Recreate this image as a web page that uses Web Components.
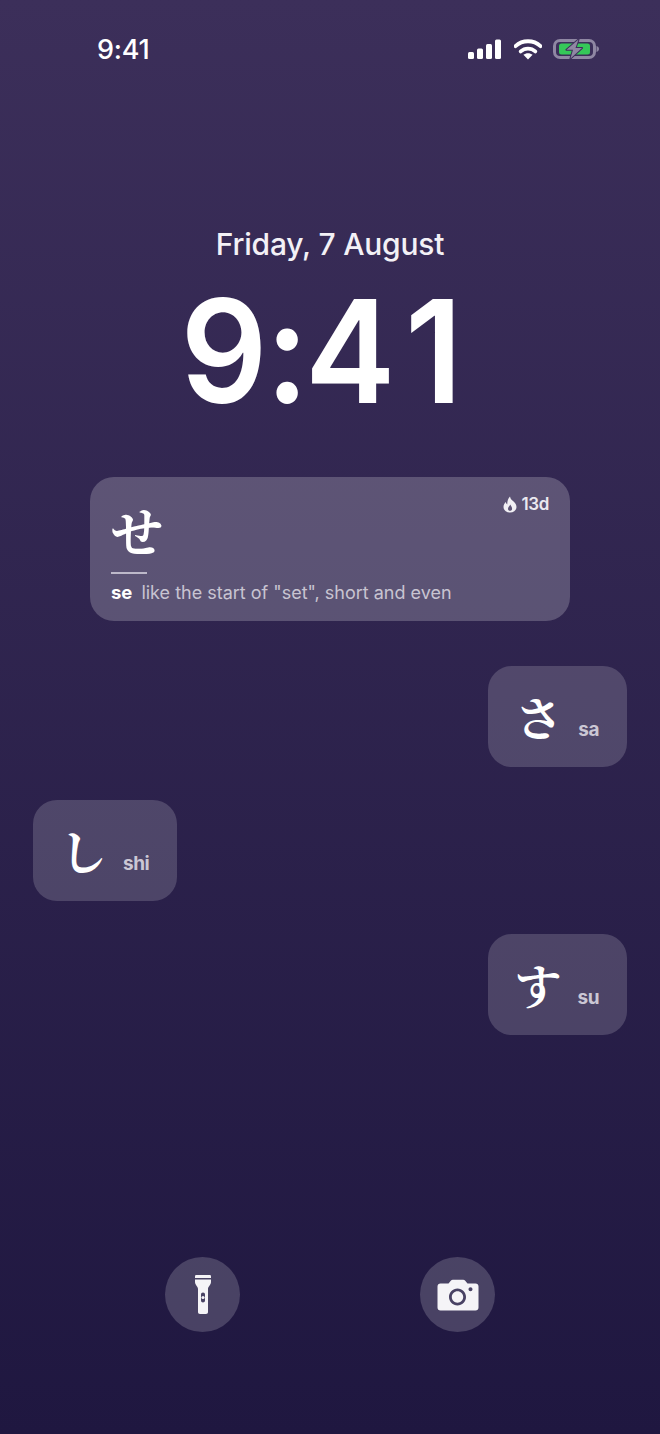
<!DOCTYPE html>
<html>
<head>
<meta charset="utf-8">
<title>Lock screen</title>
<style>
  html, body { margin: 0; height: 100%; }
  body { font-family: Inter, "Noto Sans CJK JP", sans-serif; }
</style>
</head>
<body>
<lock-screen>
  <status-bar slot="status" time="9:41"></status-bar>
  <lock-clock slot="clock" date="Friday, 7 August"></lock-clock>
  <lesson-card kana="せ" romaji="se" hint='like the start of "set", short and even' streak="13d"></lesson-card>
  <kana-chip kana="さ" romaji="sa" side="right" style="margin-top:45px"></kana-chip>
  <kana-chip kana="し" romaji="shi" side="left" style="margin-top:33px"></kana-chip>
  <kana-chip kana="す" romaji="su" side="right" style="margin-top:33px"></kana-chip>
  <quick-actions slot="actions"></quick-actions>
</lock-screen>

<script>
const KANA_FONT = '"Noto Serif CJK JP", "Noto Sans CJK JP", serif';

class LockScreen extends HTMLElement {
  constructor() {
    super();
    this.shadowDOM = this.attachShadow({ mode: "open" });
    this.shadowDOM.innerHTML = `
    <style>
      :host {
        display: flex;
        flex-direction: column;
        box-sizing: border-box;
        height: 1434px;
        overflow: hidden;
        background: linear-gradient(180deg, #3c2f5a 0%, #1f1740 100%);
        color: #fff;
      }
      .notes {
        display: flex;
        flex-direction: column;
        padding: 0 33px;
        margin-top: 39px;
      }
      .foot { margin-top: auto; }
    </style>
    <slot name="status"></slot>
    <slot name="clock"></slot>
    <div class="notes"><slot></slot></div>
    <div class="foot"><slot name="actions"></slot></div>`;
  }
}

class StatusBar extends HTMLElement {
  constructor() {
    super();
    this.shadowDOM = this.attachShadow({ mode: "open" });
    this.shadowDOM.innerHTML = `
    <style>
      :host {
        display: flex;
        align-items: center;
        justify-content: space-between;
        height: 28px;
        padding: 35px 61px 0 97px;
      }
      .time { font-size: 27px; font-weight: 500; letter-spacing: -0.2px; }
      .icons { display: flex; align-items: center; gap: 12px; }
      svg { display: block; }
    </style>
    <span class="time">${this.getAttribute("time")}</span>
    <div class="icons">
      <svg width="34" height="21" viewBox="0 0 34 21" fill="#fff">
        <rect x="0" y="13" width="6" height="7" rx="1.5"/>
        <rect x="9" y="9.5" width="6" height="10.5" rx="1.5"/>
        <rect x="18" y="5" width="6" height="15" rx="1.5"/>
        <rect x="27" y="0.5" width="6" height="19.5" rx="1.5"/>
      </svg>
      <svg width="28" height="21" viewBox="0 0 28 21">
        <path d="M1.500 7.200C8.500 0.600 19.500 0.600 26.500 7.200" fill="none" stroke="#fff" stroke-width="3.800" stroke-linecap="round"/>
        <path d="M6.700 12.400C10.900 8.600 17.100 8.600 21.300 12.400" fill="none" stroke="#fff" stroke-width="3.800" stroke-linecap="round"/>
        <path d="M14 20.500L9.400 15.800C12 13.700 16 13.700 18.600 15.800Z" fill="#fff"/>
      </svg>
      <svg width="46" height="20" viewBox="0 0 46 20" style="margin-left:-1px">
        <rect x="1.500" y="1.500" width="40" height="17" rx="5.500" fill="none" stroke="#8f87a3" stroke-width="3"/>
        <path d="M43.500 7v6c1.500-.4 2.500-1.600 2.500-3s-1-2.600-2.500-3z" fill="#8f87a3"/>
        <rect x="6" y="4.500" width="31" height="11" rx="2.500" fill="#35c759"/>
        <path d="M25.500 0.500L13.500 10.800H20L17.500 19.500L29 9H22.500Z" fill="#8f87a3" stroke="#3c2f5a" stroke-width="2" stroke-linejoin="round" paint-order="stroke"/>
      </svg>
    </div>`;
  }
}

class LockClock extends HTMLElement {
  constructor() {
    super();
    this.shadowDOM = this.attachShadow({ mode: "open" });
    this.shadowDOM.innerHTML = `
    <style>
      :host {
        display: flex;
        flex-direction: column;
        align-items: center;
        padding-top: 163px;
      }
      .date { font-size: 30px; line-height: 36px; font-weight: 500; color: #f3f1f6; letter-spacing: -0.2px; }
      .time {
        font-size: 143px;
        line-height: 170px;
        font-weight: 600;
        margin-top: 4px;
        margin-bottom: 2px;
        margin-right: 18px;
        letter-spacing: -1px;
        transform: scaleX(0.95);
      }
      .colon { margin: 0 -3px 0 -1px; }
      .one { margin-left: 11px; }
    </style>
    <div class="date">${this.getAttribute("date")}</div>
    <div class="time">9<span class="colon">:</span>4<span class="one">1</span></div>`;
  }
}

class LessonCard extends HTMLElement {
  constructor() {
    super();
    this.shadowDOM = this.attachShadow({ mode: "open" });
    this.shadowDOM.innerHTML = `
    <style>
      :host {
        display: block;
        position: relative;
        box-sizing: border-box;
        width: 480px;
        height: 144px;
        margin-left: 57px;
        padding: 23px 21px 0;
        border-radius: 24px;
        background: rgba(255, 255, 255, 0.21);
      }
      .kana { font-family: ${KANA_FONT}; font-size: 52px; line-height: 60px; font-weight: 700; color: #fff; }
      .rule { width: 36px; height: 1.5px; margin-top: 12px; background: #bdb8c9; }
      .line { display: flex; align-items: baseline; gap: 9px; margin-top: 7px; line-height: 23px; }
      .romaji { font-size: 18.500px; font-weight: 700; color: #fff; }
      .hint { font-size: 18px; color: #c8c4d1; }
      .streak {
        position: absolute;
        top: 17px;
        right: 21px;
        display: flex;
        align-items: center;
        gap: 5px;
        font-size: 17px;
        line-height: 20px;
        font-weight: 600;
        color: #ebe9ef;
        letter-spacing: -0.4px;
      }
      svg { display: block; }
    </style>
    <div class="kana">${this.getAttribute("kana")}</div>
    <div class="rule"></div>
    <div class="line">
      <span class="romaji">${this.getAttribute("romaji")}</span>
      <span class="hint">${this.getAttribute("hint")}</span>
    </div>
    <div class="streak">
      <svg width="14" height="17" viewBox="0 0 14 17">
        <path fill="#f1eff4" fill-rule="evenodd" d="M7 0.500C7.400 3 9 4 10.600 5.500C12.300 7.100 13.500 8.900 13.500 11C13.500 14.300 10.700 16.500 7 16.500C3.300 16.500 0.500 14.300 0.500 11C0.500 8.800 1.500 7.300 2.800 6C3 7.200 3.500 8 4.300 8.400C4.100 5.500 5 2.500 7 0.500ZM7.300 8.500C6.800 10 5 10.800 5 12.700C5 14 5.900 14.800 7 14.800C8.200 14.800 9.100 14 9.100 12.700C9.100 11 7.900 10 7.300 8.500Z"/>
      </svg>
      <span>${this.getAttribute("streak")}</span>
    </div>`;
  }
}

class KanaChip extends HTMLElement {
  constructor() {
    super();
    this.shadowDOM = this.attachShadow({ mode: "open" });
    const side = this.getAttribute("side");
    this.shadowDOM.innerHTML = `
    <style>
      :host {
        display: flex;
        align-items: baseline;
        justify-content: center;
        gap: 16px;
        box-sizing: border-box;
        align-self: ${side === "right" ? "flex-end" : "flex-start"};
        height: 101px;
        padding: 22px 28px 0 27px;
        border-radius: 24px;
        background: rgba(255, 255, 255, 0.17);
      }
      .kana { font-family: ${KANA_FONT}; font-size: 47px; line-height: 56px; font-weight: 700; color: #fff; }
      .romaji { font-size: 19px; font-weight: 700; color: #cbc7d4; letter-spacing: -0.5px; }
    </style>
    <span class="kana">${this.getAttribute("kana")}</span>
    <span class="romaji">${this.getAttribute("romaji")}</span>`;
  }
}

class QuickActions extends HTMLElement {
  constructor() {
    super();
    this.shadowDOM = this.attachShadow({ mode: "open" });
    this.shadowDOM.innerHTML = `
    <style>
      :host {
        display: flex;
        justify-content: center;
        gap: 180px;
        padding-bottom: 102px;
      }
      .round {
        display: flex;
        align-items: center;
        justify-content: center;
        width: 75px;
        height: 75px;
        border-radius: 50%;
        background: rgba(255, 255, 255, 0.18);
      }
      svg { display: block; }
    </style>
    <div class="round">
      <svg width="16" height="39" viewBox="0 0 16 39">
        <path fill="#f5f4f7" d="M1.500 0H14.500C15.400 0 16 .5 16 1.300V3H0V1.300C0 .5 .6 0 1.500 0Z"/>
        <path fill="#f5f4f7" fill-rule="evenodd" d="M0 4.500H16V7C16 10 13 11.500 13 14V37C13 38.200 12.300 39 11 39H5C3.700 39 3 38.200 3 37V14C3 11.500 0 10 0 7ZM8 17.500C6.800 17.500 6 18.400 6 19.500V25.500C6 26.600 6.800 27.500 8 27.500C9.200 27.500 10 26.600 10 25.500V19.500C10 18.400 9.200 17.500 8 17.500Z"/>
        <circle cx="8" cy="22.500" r="1.600" fill="#f5f4f7"/>
      </svg>
    </div>
    <div class="round">
      <svg width="42" height="32" viewBox="0 0 42 32">
        <path fill="#f5f4f7" fill-rule="evenodd" d="M3.500 4.500H11.500L13.800 1.700C14.300 1.100 15 0.800 15.800 0.800H26.200C27 0.800 27.700 1.100 28.200 1.700L30.500 4.500H38.500C40.300 4.500 41.500 5.700 41.500 7.500V28.500C41.500 30.300 40.300 31.500 38.500 31.500H3.500C1.700 31.500 0.500 30.300 0.500 28.500V7.500C0.500 5.700 1.700 4.500 3.500 4.500ZM20.500 9.500C15.800 9.500 12 13.300 12 18C12 22.700 15.800 26.500 20.500 26.500C25.200 26.500 29 22.700 29 18C29 13.300 25.200 9.500 20.500 9.500ZM20.500 12.300C23.600 12.300 26.200 14.900 26.200 18C26.200 21.100 23.600 23.700 20.500 23.700C17.400 23.700 14.800 21.100 14.800 18C14.800 14.900 17.400 12.300 20.500 12.300ZM33.500 8.200C32.400 8.200 31.500 9.100 31.500 10.200C31.500 11.300 32.400 12.200 33.500 12.200C34.600 12.200 35.500 11.300 35.500 10.200C35.500 9.100 34.600 8.200 33.500 8.200Z"/>
      </svg>
    </div>`;
  }
}

customElements.define("lock-screen", LockScreen);
customElements.define("status-bar", StatusBar);
customElements.define("lock-clock", LockClock);
customElements.define("lesson-card", LessonCard);
customElements.define("kana-chip", KanaChip);
customElements.define("quick-actions", QuickActions);
</script>
</body>
</html>
